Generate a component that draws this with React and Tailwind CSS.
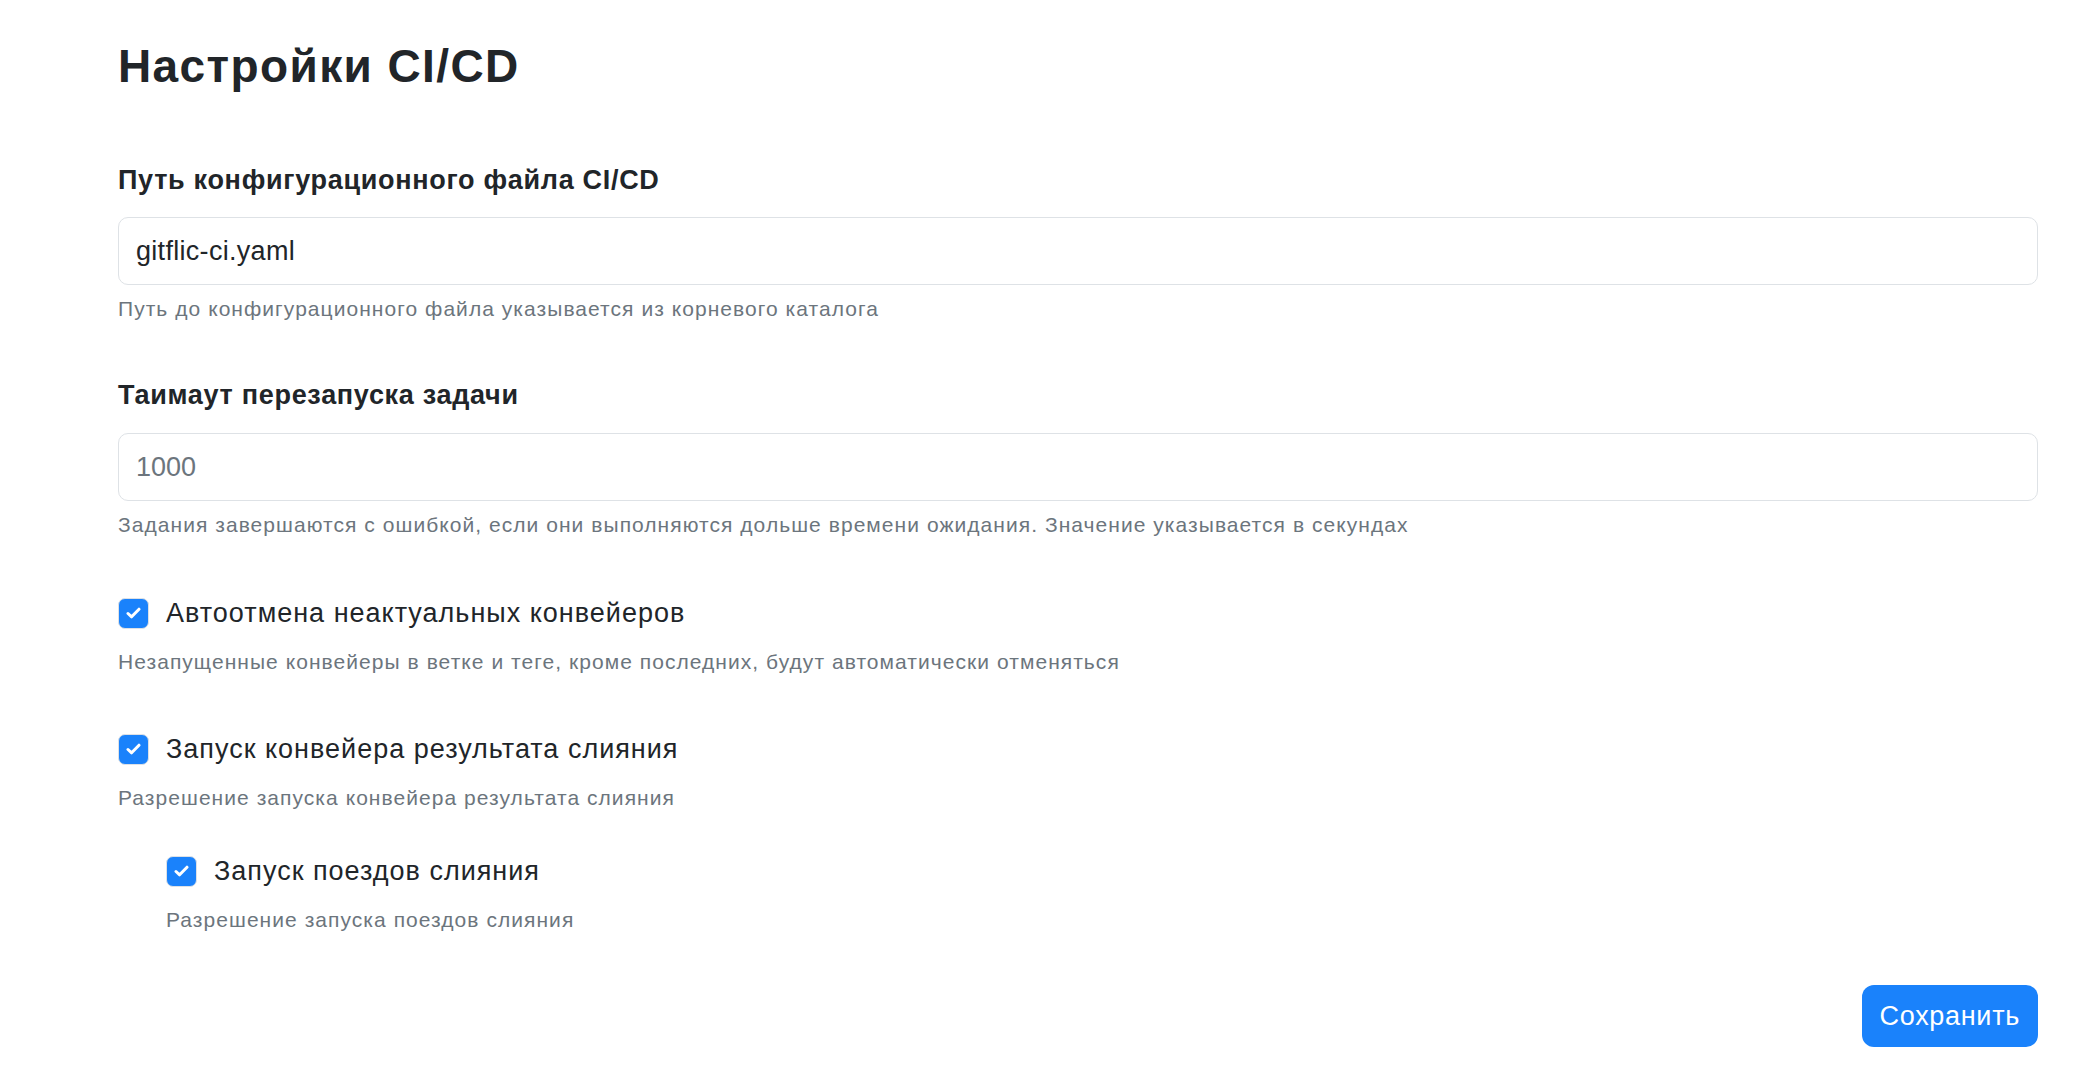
import React, { useState } from "react";

const CheckIcon = () => (
  <svg width="15" height="12" viewBox="0 0 15 12" fill="none">
    <path
      d="M2 6.5L5.6 9.8L13 2.2"
      stroke="white"
      strokeWidth="3"
      strokeLinecap="round"
      strokeLinejoin="round"
    />
  </svg>
);

const Checkbox = ({ checked, onChange, label, hint }) => (
  <div>
    <label className="flex items-center h-[36px] cursor-pointer">
      <span
        onClick={onChange}
        className={`flex items-center justify-center w-[31px] h-[31px] rounded-[7px] border-[1.5px] ${
          checked ? "bg-[#1a82fb] border-[#dde1e6]" : "bg-white border-[#dee2e6]"
        }`}
      >
        {checked && <CheckIcon />}
      </span>
      <span className="ml-[17px] text-[27px] leading-[36px] tracking-[1px] text-[#212529]">{label}</span>
    </label>
    <p className="mt-[17px] text-[21px] leading-[28px] tracking-[1.05px] text-[#6c757d]">{hint}</p>
  </div>
);

const App = () => {
  const [configPath, setConfigPath] = useState("gitflic-ci.yaml");
  const [timeout, setTimeoutValue] = useState("");
  const [autoCancel, setAutoCancel] = useState(true);
  const [mergeResult, setMergeResult] = useState(true);
  const [mergeTrains, setMergeTrains] = useState(true);

  return (
    <div className="min-h-screen bg-white font-['Liberation_Sans',Arial,sans-serif] pl-[118px] pr-[40px] pt-[40px]">
      <h1 className="text-[46px] leading-[52px] font-bold tracking-[1.4px] text-[#212529]">Настройки CI/CD</h1>

      {/* Config file path */}
      <div className="mt-[72px]">
        <div className="text-[27px] leading-[32px] font-bold tracking-[0.7px] text-[#212529]">
          Путь конфигурационного файла CI/CD
        </div>
        <input
          type="text"
          value={configPath}
          onChange={(e) => setConfigPath(e.target.value)}
          className="mt-[21px] w-full h-[68px] px-[17px] rounded-[10px] border-[1.5px] border-[#dee2e6] text-[27px] tracking-[0.3px] text-[#212529] outline-none"
        />
        <p className="mt-[10px] text-[21px] leading-[28px] tracking-[1.05px] text-[#6c757d]">
          Путь до конфигурационного файла указывается из корневого каталога
        </p>
      </div>

      {/* Job timeout */}
      <div className="mt-[56px]">
        <div className="text-[27px] leading-[32px] font-bold tracking-[0.7px] text-[#212529]">
          Таимаут перезапуска задачи
        </div>
        <input
          type="text"
          value={timeout}
          placeholder="1000"
          onChange={(e) => setTimeoutValue(e.target.value)}
          className="mt-[22px] w-full h-[68px] px-[17px] rounded-[10px] border-[1.5px] border-[#dee2e6] text-[27px] text-[#212529] placeholder:text-[#6c757d] outline-none"
        />
        <p className="mt-[10px] text-[21px] leading-[28px] tracking-[1.05px] text-[#6c757d]">
          Задания завершаются с ошибкой, если они выполняются дольше времени ожидания. Значение указывается в секундах
        </p>
      </div>

      <div className="mt-[56px]">
        <Checkbox
          checked={autoCancel}
          onChange={() => setAutoCancel(!autoCancel)}
          label="Автоотмена неактуальных конвейеров"
          hint="Незапущенные конвейеры в ветке и теге, кроме последних, будут автоматически отменяться"
        />
      </div>

      <div className="mt-[55px]">
        <Checkbox
          checked={mergeResult}
          onChange={() => setMergeResult(!mergeResult)}
          label="Запуск конвейера результата слияния"
          hint="Разрешение запуска конвейера результата слияния"
        />
      </div>

      <div className="mt-[41px] pl-[48px]">
        <Checkbox
          checked={mergeTrains}
          onChange={() => setMergeTrains(!mergeTrains)}
          label="Запуск поездов слияния"
          hint="Разрешение запуска поездов слияния"
        />
      </div>

      <div className="flex justify-end mt-[51px]">
        <button className="h-[62px] px-[18px] rounded-[12px] bg-[#1a82fb] text-white text-[27px] tracking-[0.7px]">
          Сохранить
        </button>
      </div>
    </div>
  );
};

export default App;
